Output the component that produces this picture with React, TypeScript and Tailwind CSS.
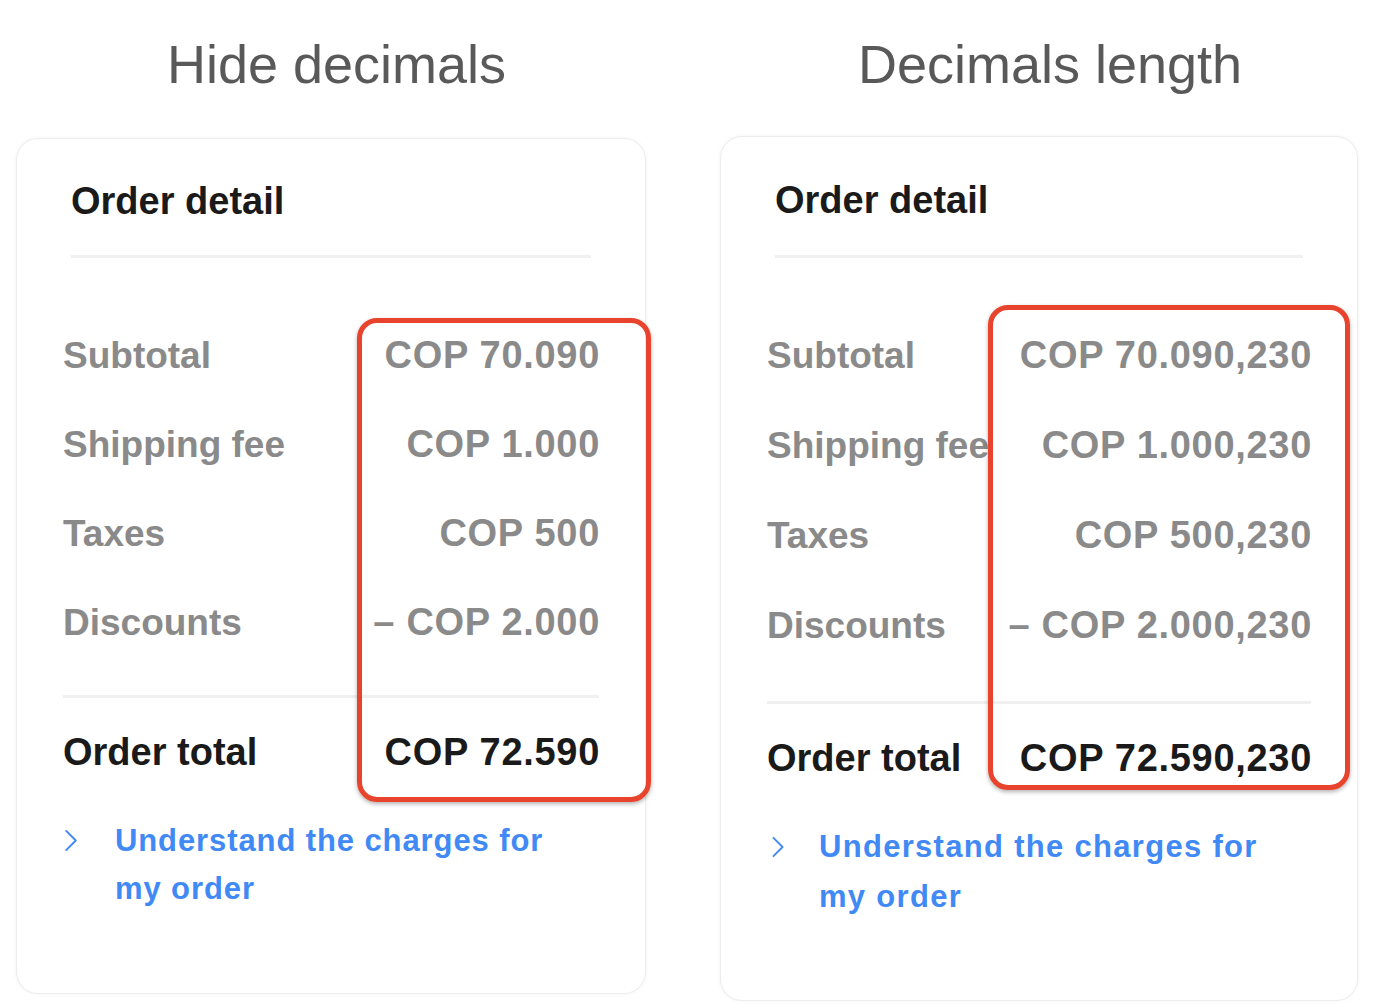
import React from "react";

type Row = { label: string; value: string };

type CardProps = {
  rows: Row[];
  total: string;
  variant: "left" | "right";
};

const font = { fontFamily: '"Liberation Sans", Arial, sans-serif' };

function Chevron({ className }: { className: string }) {
  return (
    <svg viewBox="0 0 14 24" className={className} fill="none">
      <path d="M2 2 L12 12 L2 22" stroke="#4189f5" strokeWidth="2" strokeLinecap="round" strokeLinejoin="round" />
    </svg>
  );
}

function OrderCard({ rows, total, variant }: CardProps) {
  const isLeft = variant === "left";
  return (
    <div
      className={
        isLeft
          ? "relative w-[630px] mt-[47px] rounded-[22px] border border-[#ededed] bg-white px-[46px] pr-[46px] pt-[43px] pb-[80px] shadow-[0_0_4px_rgba(0,0,0,0.05)]"
          : "relative w-[638px] mt-[45px] rounded-[22px] border border-[#ededed] bg-white px-[46px] pr-[46px] pt-[44px] pb-[78px] shadow-[0_0_4px_rgba(0,0,0,0.05)]"
      }
    >
      <div className="px-[8px]">
        <h2 className="text-[38px] font-bold leading-none text-[#1a1a1a]">Order detail</h2>
        <div className={isLeft ? "mt-[35px] h-[3px] bg-[#f0f0f0]" : "mt-[36px] h-[3px] bg-[#f0f0f0]"} />
      </div>

      <div className={isLeft ? "mt-[53px]" : "mt-[52px]"}>
        {rows.map((r) => (
          <div
            key={r.label}
            className={
              isLeft
                ? "flex h-[89px] items-baseline justify-between font-bold leading-[89px] text-[#8a8a8a]"
                : "flex h-[90px] items-baseline justify-between font-bold leading-[90px] text-[#8a8a8a]"
            }
          >
            <span className="whitespace-nowrap text-[37px]">{r.label}</span>
            <span className="-mr-[1px] whitespace-nowrap text-[38px] tracking-[0.7px]">{r.value}</span>
          </div>
        ))}
      </div>

      <div className={isLeft ? "mt-[28px] h-[3px] bg-[#f0f0f0]" : "mt-[31px] h-[3px] bg-[#f0f0f0]"} />

      <div className="mt-[35px] flex items-baseline justify-between font-bold leading-none text-[#1a1a1a]">
        <span className="whitespace-nowrap text-[38px]">Order total</span>
        <span className="-mr-[1px] whitespace-nowrap text-[38px] tracking-[0.7px]">{total}</span>
      </div>

      <div className={isLeft ? "mt-[46px] flex" : "mt-[45px] flex"}>
        <div className="w-[52px] shrink-0">
          <Chevron className={isLeft ? "ml-[1px] mt-[12px] h-[23px] w-[14px]" : "ml-[4px] mt-[14px] h-[22px] w-[14px]"} />
        </div>
        <a
          href="#"
          className={
            isLeft
              ? "block text-[31px] font-bold leading-[48px] tracking-[0.9px] text-[#4189f5]"
              : "block text-[31px] font-bold leading-[50px] tracking-[1.3px] text-[#4189f5]"
          }
        >
          Understand the charges for
          <br />
          my order
        </a>
      </div>

      <div
        className={
          isLeft
            ? "pointer-events-none absolute left-[340px] top-[179px] h-[484px] w-[294px] rounded-[20px] border-[5px] border-[#e8432d] shadow-[0_2px_4px_rgba(0,0,0,0.3)]"
            : "pointer-events-none absolute left-[267px] top-[168px] h-[485px] w-[362px] rounded-[20px] border-[5px] border-[#e8432d] shadow-[0_2px_4px_rgba(0,0,0,0.3)]"
        }
      />
    </div>
  );
}

export default function App() {
  return (
    <div className="min-h-screen bg-white" style={font}>
      <div className="flex gap-[74px] pl-[16px] pt-[37px]">
        <div className="flex flex-col">
          <h1 className="pl-[11px] text-center text-[54px] leading-none text-[#595959]">Hide decimals</h1>
          <OrderCard
            variant="left"
            rows={[
              { label: "Subtotal", value: "COP 70.090" },
              { label: "Shipping fee", value: "COP 1.000" },
              { label: "Taxes", value: "COP 500" },
              { label: "Discounts", value: "– COP 2.000" },
            ]}
            total="COP 72.590"
          />
        </div>
        <div className="flex flex-col">
          <h1 className="pl-[22px] text-center text-[54px] leading-none text-[#595959]">Decimals length</h1>
          <OrderCard
            variant="right"
            rows={[
              { label: "Subtotal", value: "COP 70.090,230" },
              { label: "Shipping fee", value: "COP 1.000,230" },
              { label: "Taxes", value: "COP 500,230" },
              { label: "Discounts", value: "– COP 2.000,230" },
            ]}
            total="COP 72.590,230"
          />
        </div>
      </div>
    </div>
  );
}
